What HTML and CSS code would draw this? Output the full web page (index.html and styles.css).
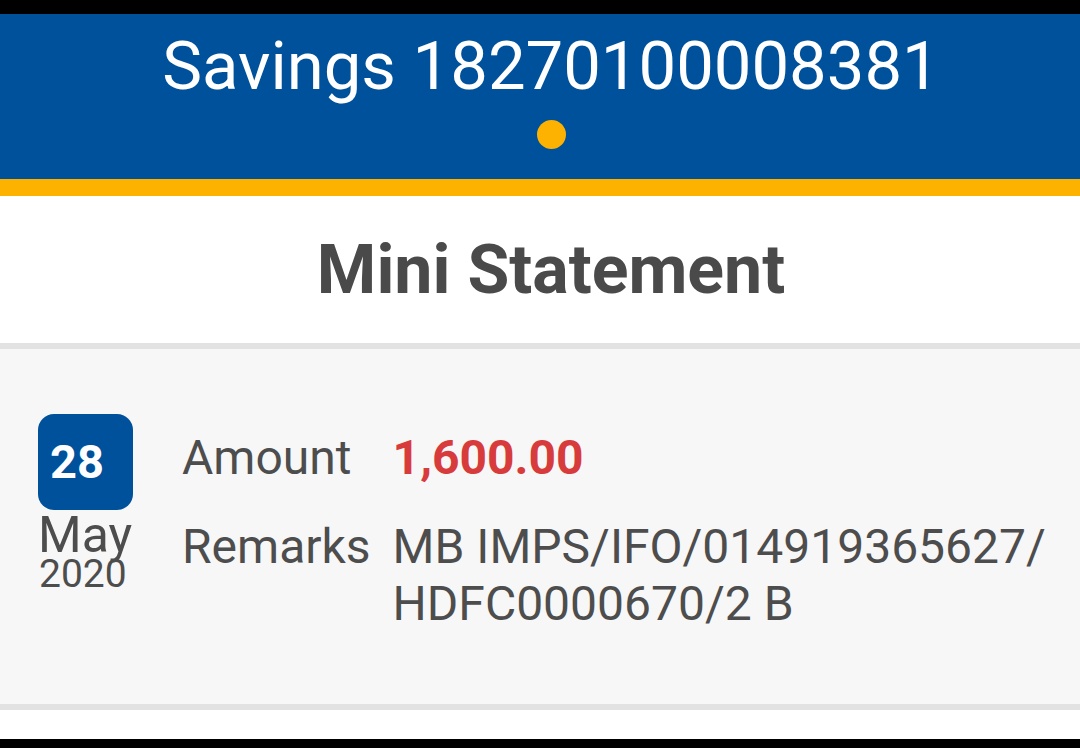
FILE: index.html
```html
<!DOCTYPE html>
<html lang="en">
<head>
<meta charset="utf-8">
<title>Mini Statement</title>
<link rel="stylesheet" href="styles.css">
</head>
<body>
<div class="screen">
  <div class="statusbar"></div>
  <header class="account-header">
    <h1 class="account-title">Savings 18270100008381</h1>
    <span class="page-dot"></span>
  </header>
  <div class="accent-bar"></div>
  <section class="section-title">
    <h2>Mini Statement</h2>
  </section>
  <div class="divider"></div>
  <article class="txn">
    <div class="txn-date">
      <div class="day-badge">28</div>
      <div class="month">May</div>
      <div class="year">2020</div>
    </div>
    <dl class="txn-details">
      <dt>Amount</dt>
      <dd class="amount">1,600.00</dd>
      <dt>Remarks</dt>
      <dd>MB IMPS/IFO/014919365627/<br>HDFC0000670/2 B</dd>
    </dl>
  </article>
  <div class="divider"></div>
  <div class="spacer"></div>
  <div class="navbar"></div>
</div>
</body>
</html>
```
FILE: styles.css
```css
* { box-sizing: border-box; }
html, body { margin: 0; padding: 0; background: #fff; }
body { font-family: Roboto, "Noto Sans", "Liberation Sans", sans-serif; }

.screen {
  width: 1080px;
  height: 748px;
  overflow: hidden;
  display: flex;
  flex-direction: column;
}

.statusbar { height: 14px; background: #000; flex: none; }

.account-header {
  flex: none;
  height: 165px;
  background: #00519b;
  display: flex;
  flex-direction: column;
  align-items: center;
  padding: 12px 0 0 22px;
}
.account-title {
  margin: 0;
  font-weight: 400;
  font-size: 67px;
  line-height: 80px;
  color: #fff;
}
.page-dot {
  margin-top: 14px;
  width: 29px;
  height: 29px;
  border-radius: 50%;
  background: #fdb100;
}

.accent-bar { flex: none; height: 17px; background: #feb200; }

.section-title {
  flex: none;
  height: 147px;
  padding: 34px 0 0 22px;
  text-align: center;
}
.section-title h2 {
  margin: 0;
  font-size: 68px;
  line-height: 80px;
  font-weight: 700;
  color: #4a4a4a;
}

.divider { flex: none; height: 6px; background: #e2e2e2; }

.txn {
  flex: none;
  height: 355px;
  background: #f7f7f7;
  display: flex;
  align-items: flex-start;
  padding: 65px 20px 0 38px;
  gap: 49px;
}
.txn-date {
  width: 95px;
  display: flex;
  flex-direction: column;
  color: #4d4d4d;
}
.day-badge {
  width: 95px;
  height: 96px;
  border-radius: 16px;
  background: #00519b;
  color: #fff;
  font-weight: 700;
  font-size: 47px;
  line-height: 96px;
  padding-left: 12px;
}
.month {
  margin-top: 4px;
  font-size: 50px;
  line-height: 42px;
}
.year {
  font-size: 39px;
  line-height: 36px;
  padding-left: 1px;
}

.txn-details {
  margin: 15px 0 0;
  display: grid;
  grid-template-columns: auto 1fr;
  column-gap: 22px;
  row-gap: 32px;
  font-size: 48px;
  line-height: 57px;
  color: #4d4d4d;
}
.txn-details dt, .txn-details dd { margin: 0; }
.txn-details .amount { color: #d83b3b; font-weight: 700; }

.spacer { flex: none; height: 29px; background: #fff; }
.navbar { flex: 1; background: #000; }
```
